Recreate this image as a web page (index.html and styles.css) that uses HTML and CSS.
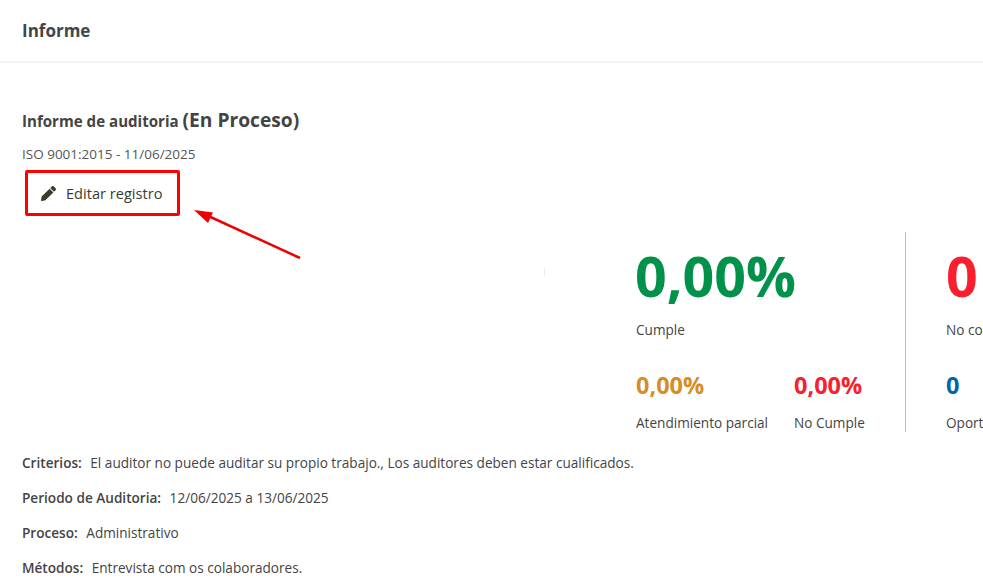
FILE: index.html
```html
<!DOCTYPE html>
<html lang="es">
<head>
<meta charset="utf-8">
<title>Informe</title>
<link rel="stylesheet" href="styles.css">
</head>
<body>
<header class="topbar"><h1 class="topbar-title">Informe</h1></header>
<main class="content">
  <h2 class="report-title">Informe de auditoria <span class="report-status">(En Proceso)</span></h2>
  <p class="report-sub">ISO 9001:2015 - 11/06/2025</p>
  <button class="edit-btn" type="button">
    <svg class="edit-icon" viewBox="0 0 512 512" aria-hidden="true"><path d="M497.9 142.1l-46.1 46.1c-4.7 4.7-12.3 4.7-17 0l-111-111c-4.7-4.7-4.7-12.3 0-17l46.1-46.1c18.7-18.7 49.1-18.7 67.9 0l60.1 60.1c18.8 18.7 18.8 49.1 0 67.9zM284.2 99.8L21.6 362.4.4 483.9c-2.9 16.4 11.4 30.6 27.8 27.8l121.5-21.3 262.6-262.6c4.7-4.7 4.7-12.3 0-17l-111-111c-4.8-4.7-12.4-4.7-17.1 0z"/></svg>
    <span>Editar registro</span>
  </button>
  <section class="dash">
    <div class="chart-area"><span class="chart-tick"></span></div>
    <div class="stats">
      <div class="stats-left">
        <div class="big green">0,00%</div>
        <div class="label big-label">Cumple</div>
        <div class="pair">
          <div class="pair-item">
            <div class="small orange">0,00%</div>
            <div class="label">Atendimiento parcial</div>
          </div>
          <div class="pair-item">
            <div class="small red">0,00%</div>
            <div class="label">No Cumple</div>
          </div>
        </div>
      </div>
      <div class="stats-right">
        <div class="big red">0</div>
        <div class="label big-label">No conformidades</div>
        <div class="pair">
          <div class="pair-item">
            <div class="small blue">0</div>
            <div class="label">Oportunidades de mejora</div>
          </div>
        </div>
      </div>
    </div>
  </section>
  <section class="details">
    <p class="detail"><b>Criterios:</b> El auditor no puede auditar su propio trabajo., Los auditores deben estar cualificados.</p>
    <p class="detail"><b>Periodo de Auditoria:</b> 12/06/2025 a 13/06/2025</p>
    <p class="detail"><b>Proceso:</b> Administrativo</p>
    <p class="detail"><b>Métodos:</b> Entrevista com os colaboradores.</p>
  </section>
</main>
<svg class="arrow" viewBox="0 0 983 578" aria-hidden="true">
  <line x1="300" y1="258" x2="204" y2="214" stroke="#f00000" stroke-width="2.5"/>
  <polygon points="194,210 213,212.5 208,223" fill="#f00000"/>
</svg>
</body>
</html>
```
FILE: styles.css
```css
html, body { margin: 0; height: 100%; overflow: hidden; background: #fff; }
body { font-family: "Open Sans", "Noto Sans", sans-serif; color: #444; width: 983px; height: 578px; position: relative; }
.topbar { height: 61px; border-bottom: 2px solid #f2f2f2; display: flex; align-items: center; padding-left: 22px; }
.topbar-title { margin: 0; font-size: 17px; font-weight: 700; color: #3f4648; }
.content { padding: 45px 0 0 22px; }
.report-title { margin: 0; font-size: 15.1px; font-weight: 700; line-height: 24px; color: #444; }
.report-status { font-size: 19.2px; font-weight: 700; }
.report-sub { margin: 12px 0 0; font-size: 13.5px; line-height: 18px; color: #555; }
.edit-btn { margin: 7px 0 0 3px; width: 155px; height: 46px; border: 3px solid #f00; border-radius: 2px; background: #fff; display: flex; align-items: center; gap: 10px; padding: 0 0 0 13px; font: 400 14.6px "Open Sans", sans-serif; color: #3b3b2e; box-sizing: border-box; }
.edit-icon { width: 15px; height: 15px; fill: #3b3b2e; flex: none; }
.dash { display: flex; margin-top: 16px; height: 200px; }
.chart-area { width: 614px; position: relative; flex: none; }
.chart-tick { position: absolute; left: 522px; top: 36px; width: 1px; height: 8px; background: #efece4; }
.stats { display: flex; flex: none; }
.stats-left { width: 270px; flex: none; border-right: 1px solid #bdbdbd; box-sizing: border-box; }
.stats-right { padding-left: 40px; white-space: nowrap; }
.big { font-size: 55.5px; font-weight: 700; line-height: 76px; margin-top: 6px; }
.stats-left .big { margin-left: -1px; }
.big-label { margin-top: 7px; }
.label { font-size: 13.6px; line-height: 18px; font-weight: 500; color: #444; white-space: nowrap; }
.pair { display: flex; margin-top: 31px; }
.pair-item { width: 158px; flex: none; }
.small { font-size: 23.5px; font-weight: 700; line-height: 30px; margin-bottom: 14px; }
.green { color: #00924a; }
.red { color: #f8202e; }
.orange { color: #d68d28; }
.blue { color: #0064ad; }
.details { margin-top: 22px; }
.detail { margin: 0 0 17px; font-size: 13.6px; line-height: 18px; color: #444; }
.detail b { font-weight: 600; margin-right: 5px; }
.arrow { position: absolute; inset: 0; width: 983px; height: 578px; pointer-events: none; }
```
